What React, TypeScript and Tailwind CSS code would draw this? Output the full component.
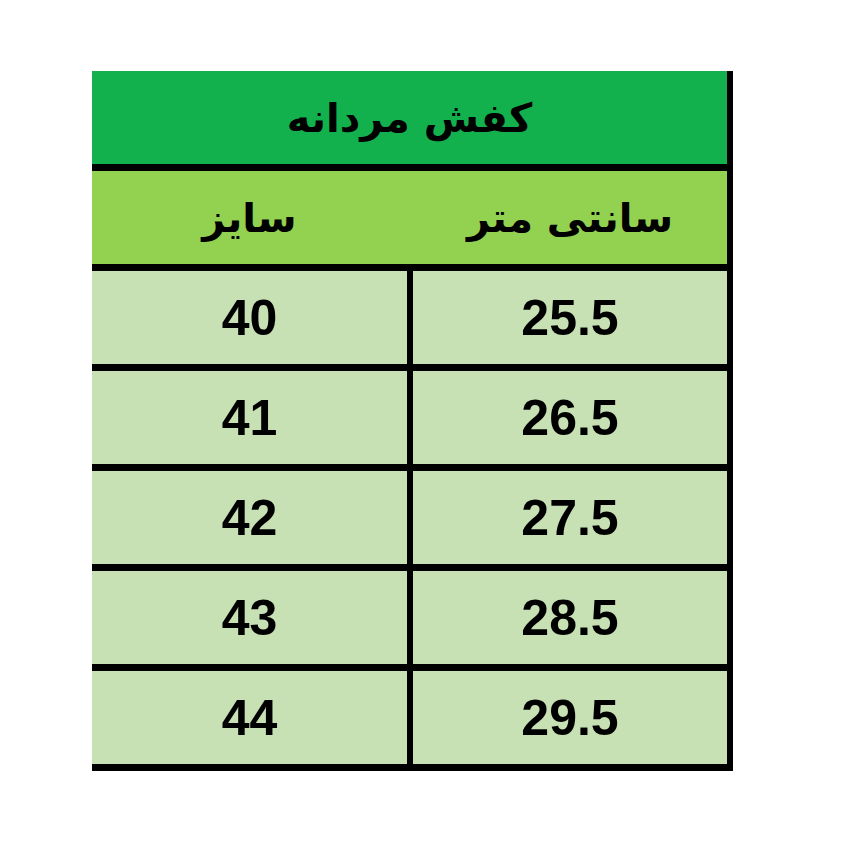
import React from "react";

const rows = [
  { size: "40", cm: "25.5" },
  { size: "41", cm: "26.5" },
  { size: "42", cm: "27.5" },
  { size: "43", cm: "28.5" },
  { size: "44", cm: "29.5" },
];

const arabic = { fontFamily: '"DejaVu Sans", "Noto Sans", sans-serif' };
const latin = { fontFamily: '"Liberation Sans", Arial, sans-serif' };

export default function App() {
  return (
    <div className="w-[843px] h-[843px] bg-white pt-[71px] pl-[92px]">
      <div className="w-[641px] border-r-[6px] border-black">
        {/* عنوان جدول */}
        <div
          dir="rtl"
          className="h-[100px] pb-[7px] border-b-[7px] border-black bg-[#13b04e] flex items-center justify-center box-content"
          style={{ height: 93, paddingBottom: 0 }}
        >
          <span className="text-[40px] font-bold text-black" style={arabic}>
            كفش مردانه
          </span>
        </div>

        {/* سرستون‌ها */}
        <div className="h-[93px] box-content border-b-[7px] border-black bg-[#93d150] flex">
          <div className="w-[315px] flex items-center justify-center">
            <span dir="rtl" className="text-[40px] font-bold text-black" style={arabic}>
              سایز
            </span>
          </div>
          <div className="w-[6px]" />
          <div className="flex-1 flex items-center justify-center">
            <span dir="rtl" className="text-[40px] font-bold text-black" style={arabic}>
              سانتی متر
            </span>
          </div>
        </div>

        {rows.map((r) => (
          <div
            key={r.size}
            className="h-[93px] box-content border-b-[7px] border-black bg-[#c7e1b5] flex"
          >
            <div className="w-[315px] flex items-center justify-center">
              <span className="text-[50px] font-bold text-black leading-none" style={latin}>
                {r.size}
              </span>
            </div>
            <div className="w-[6px] bg-black" />
            <div className="flex-1 flex items-center justify-center">
              <span className="text-[50px] font-bold text-black leading-none" style={latin}>
                {r.cm}
              </span>
            </div>
          </div>
        ))}
      </div>
    </div>
  );
}
